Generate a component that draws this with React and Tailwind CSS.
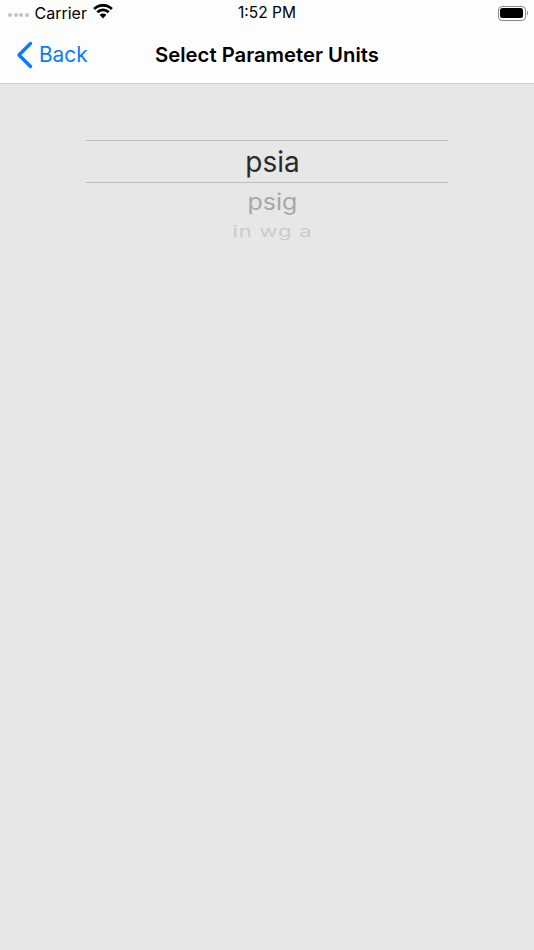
const font = { fontFamily: '"Inter", "Liberation Sans", sans-serif' }

function Wifi() {
  return (
    <svg width="20" height="15" viewBox="0 0 20 15" className="ml-[6px] mt-[-3px]">
      <path d="M10 14.5 L6.6 10.8 A4.8 4.8 0 0 1 13.4 10.8 Z" fill="#000" />
      <path d="M4.3 8.3 A8 8 0 0 1 15.7 8.3" fill="none" stroke="#000" strokeWidth="2.7" />
      <path d="M1.1 5 A12.6 12.6 0 0 1 18.9 5" fill="none" stroke="#000" strokeWidth="2.7" />
    </svg>
  )
}

function Battery() {
  return (
    <div className="flex items-center">
      <div className="w-[28px] h-[15px] rounded-[4px] border border-[#8a8a8a] p-[1.5px]">
        <div className="w-full h-full rounded-[2.5px] bg-black" />
      </div>
      <div className="w-[1.5px] h-[4px] bg-[#9a9a9a] ml-[1px]" />
    </div>
  )
}

export default function App() {
  return (
    <div className="w-[534px] h-[950px] flex flex-col bg-[#e7e7e7] overflow-hidden" style={font}>
      <div className="h-[84px] bg-[#fdfdfd] border-b border-[#cfcfcf] shrink-0">
        <div className="h-[26px] relative flex items-center pl-[8px] pr-[6px] justify-between">
          <div className="flex items-center">
            <div className="flex gap-[1.5px] mr-[5px] mt-[3px]">
              {[0, 1, 2, 3].map((i) => (
                <span key={i} className="w-[4px] h-[4px] rounded-full bg-[#c4c4c4]" />
              ))}
            </div>
            <span className="text-[16px] leading-none text-black ml-[1px]">Carrier</span>
            <Wifi />
          </div>
          <span className="absolute left-0 right-0 text-center text-[15.5px] leading-none text-black">1:52 PM</span>
          <Battery />
        </div>
        <div className="h-[57px] relative flex items-center">
          <div className="flex items-center pl-[16px]">
            <svg width="17" height="28" viewBox="0 0 17 28">
              <path d="M14.5 2.5 L3 14 L14.5 25.5" fill="none" stroke="#0a7aff" strokeWidth="3.4" strokeLinecap="round" strokeLinejoin="round" />
            </svg>
            <span className="ml-[6px] mt-[2px] text-[20.8px] leading-none text-[#0a7aff]">Back</span>
          </div>
          <span className="absolute left-0 w-[534px] mt-[1px] text-center text-[20.3px] font-semibold leading-none text-black">
            Select Parameter Units
          </span>
        </div>
      </div>
      <div className="pt-[56px] flex justify-center">
        <div className="w-[362px] flex flex-col items-center">
          <div className="w-full h-[43px] border-y border-[#bdbdbd] flex items-center justify-center pl-[11px] text-[28px] leading-none text-[#2a2a2a]">
            psia
          </div>
          <div className="h-[38px] flex items-center justify-center pl-[11px] text-[25px] leading-none text-[#a8a8a8] scale-y-[0.9]">
            psig
          </div>
          <div className="h-[19px] overflow-hidden w-full flex items-start justify-center pl-[11px]">
            <span className="text-[22px] leading-[22px] text-[#cbcbcb] scale-y-[0.72] origin-top mt-[2px] tracking-[0.8px]">
              in wg a
            </span>
          </div>
        </div>
      </div>
    </div>
  )
}
